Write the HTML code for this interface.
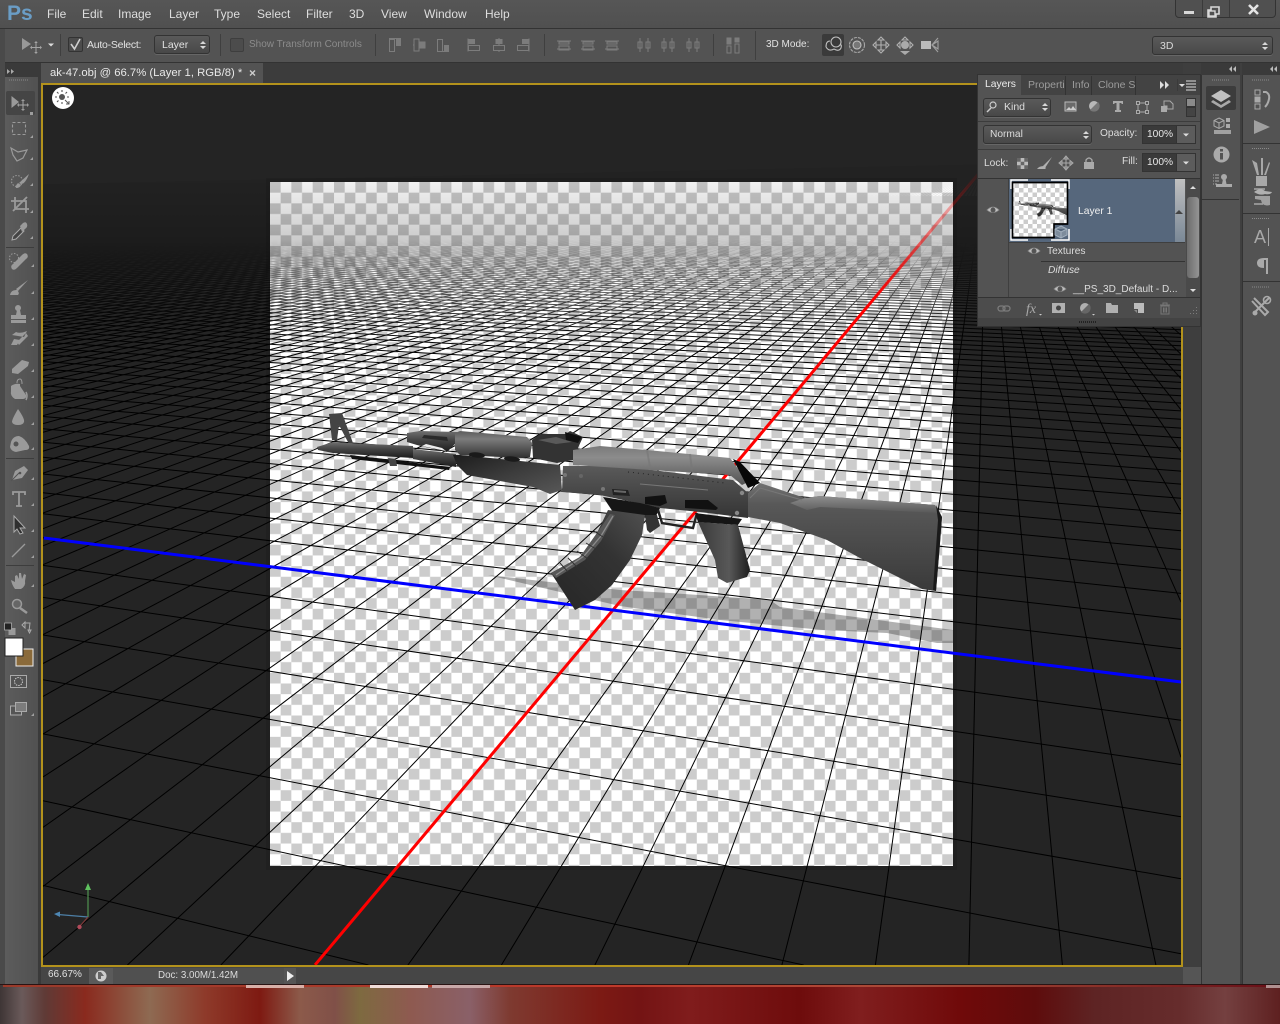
<!DOCTYPE html>
<html><head><meta charset="utf-8"><style>
html,body{margin:0;padding:0;background:#535353;width:1280px;height:1024px;overflow:hidden}
body{position:relative;font-family:"Liberation Sans",sans-serif}
.a{position:absolute}
.t{position:absolute;white-space:nowrap;font-size:11px;line-height:14px;color:#dcdcdc}
.m{font-size:12px;color:#dedede;top:7px}
.dd{position:absolute;box-sizing:border-box;background:linear-gradient(#5a5a5a,#484848);border:1px solid #333;border-radius:3px;box-shadow:0 1px 0 #666}
.fld{position:absolute;box-sizing:border-box;background:#3a3a3a;border:1px solid #333;width:35px;height:19px}
.arb{position:absolute;box-sizing:border-box;background:#5c5c5c;border:1px solid #333;border-left:0;width:19px;height:19px}
</style></head><body>
<div class="a" style="left:0;top:0;width:1280px;height:28px;background:linear-gradient(#565656,#505050)"></div>
<div class="a" style="left:0;top:28px;width:1280px;height:1px;background:#333"></div>
<div class="a" style="left:0;top:29px;width:1280px;height:33px;background:#535353"></div>
<div class="a" style="left:0;top:62px;width:1280px;height:1px;background:#333"></div>
<div class="a" style="left:0;top:63px;width:1201px;height:20px;background:#3c3c3c"></div>
<div class="a" style="left:0;top:29px;width:5px;height:955px;background:#4a4a4a"></div>
<div class="a" style="left:5px;top:63px;width:34px;height:14px;background:#3a3a3a"></div>
<div class="a" style="left:5px;top:77px;width:33px;height:907px;background:linear-gradient(90deg,#5c5c5c,#515151)"></div>
<div class="a" style="left:38px;top:63px;width:3px;height:921px;background:#3a3a3a"></div>
<div class="a" style="left:6px;top:91px;width:29px;height:24px;background:#454545;border-radius:2px"></div>
<div class="a" style="left:41px;top:63px;width:222px;height:20px;background:#535353"></div>

<!-- document view -->
<div class="a" style="left:41px;top:83px;width:1138px;height:880px;border:2px solid #b3921c;overflow:hidden;background:#242424">
<svg id="v" width="1138" height="880" viewBox="43 85 1138 880" style="display:block" xmlns="http://www.w3.org/2000/svg">
<defs>
<pattern id="chk" x="270" y="182" width="21.34" height="21.34" patternUnits="userSpaceOnUse"><rect width="21.34" height="21.34" fill="#fff"/><rect width="10.67" height="10.67" fill="#ccc"/><rect x="10.67" y="10.67" width="10.67" height="10.67" fill="#ccc"/></pattern>
<pattern id="chk2" width="9" height="9" patternUnits="userSpaceOnUse"><rect width="9" height="9" fill="#fff"/><rect width="4.5" height="4.5" fill="#ccc"/><rect x="4.5" y="4.5" width="4.5" height="4.5" fill="#ccc"/></pattern>
<linearGradient id="fade" gradientUnits="userSpaceOnUse" x1="0" y1="180" x2="0" y2="350"><stop offset="0" stop-color="#fff" stop-opacity=".05"/><stop offset=".35" stop-color="#fff" stop-opacity=".2"/><stop offset=".62" stop-color="#fff" stop-opacity=".55"/><stop offset=".85" stop-color="#fff" stop-opacity=".9"/><stop offset="1" stop-color="#fff" stop-opacity="1"/></linearGradient>
<mask id="gm" maskUnits="userSpaceOnUse" x="0" y="0" width="1280" height="1024"><rect width="1280" height="1024" fill="url(#fade)"/></mask>
<linearGradient id="rf" gradientUnits="userSpaceOnUse" x1="0" y1="170" x2="0" y2="300"><stop offset="0" stop-color="#f00" stop-opacity=".05"/><stop offset=".4" stop-color="#f00" stop-opacity=".4"/><stop offset="1" stop-color="#f00"/></linearGradient>
<linearGradient id="gV" x1="0" y1="0" x2="0" y2="1"><stop offset="0" stop-color="#707070"/><stop offset=".45" stop-color="#444"/><stop offset="1" stop-color="#1c1c1c"/></linearGradient>
<linearGradient id="gHg" x1="0" y1="0" x2="0" y2="1"><stop offset="0" stop-color="#5c5c5c"/><stop offset=".3" stop-color="#7c7c7c"/><stop offset=".7" stop-color="#505050"/><stop offset="1" stop-color="#303030"/></linearGradient>
<linearGradient id="gLo" x1="0" y1="0" x2="1" y2="1"><stop offset="0" stop-color="#1c1c1c"/><stop offset=".5" stop-color="#3c3c3c"/><stop offset="1" stop-color="#585858"/></linearGradient>
<linearGradient id="gDc" x1="0" y1="0" x2="0" y2="1"><stop offset="0" stop-color="#7a7a7a"/><stop offset=".3" stop-color="#8c8c8c"/><stop offset="1" stop-color="#525252"/></linearGradient>
<linearGradient id="gRc" x1="0" y1="0" x2="0" y2="1"><stop offset="0" stop-color="#5a5a5a"/><stop offset="1" stop-color="#343434"/></linearGradient>
<linearGradient id="gMg" x1="0" y1="1" x2="1" y2="0"><stop offset="0" stop-color="#262626"/><stop offset=".6" stop-color="#333"/><stop offset="1" stop-color="#505050"/></linearGradient>
<linearGradient id="gGr" x1="0" y1="0" x2="1" y2="0"><stop offset="0" stop-color="#3a3a3a"/><stop offset=".6" stop-color="#585858"/><stop offset="1" stop-color="#1e1e1e"/></linearGradient>
<linearGradient id="gSt" x1="0" y1="0" x2="0" y2="1"><stop offset="0" stop-color="#727272"/><stop offset=".2" stop-color="#585858"/><stop offset="1" stop-color="#3a3a3a"/></linearGradient>
<linearGradient id="gTop" x1="0" y1="0" x2="0" y2="1"><stop offset="0" stop-color="#8e8e8e"/><stop offset="1" stop-color="#585858"/></linearGradient>
<g id="gun">
<path d="M329 414L342 413L353 443L349 444L339 425L337 440L332 440Z" fill="#444"/>
<path d="M350 455L450 467L449 470L352 459Z" fill="#111"/>
<path d="M388 458L396 459L397 466L390 466Z" fill="#444"/>
<path d="M317 447L333 442L348 443L413 446L413 458L348 454L333 453L318 450Z" fill="url(#gV)"/>
<path d="M413 449L456 454L456 467L413 459Z" fill="url(#gV)"/>
<path d="M407 433L420 431L457 432L457 442L447 452L417 445L407 442Z" fill="url(#gV)"/>
<path d="M422 446L446 451L442 448L426 444Z" fill="#eee"/>
<path d="M422 438L448 441L447 437L424 435Z" fill="#2a2a2a"/>
<path d="M453 455L460 455L560 465L562 490L550 494L533 487L467 475L457 465Z" fill="url(#gLo)"/>
<path d="M455 433L460 431L527 437L532 443L530 457L523 458L460 455L455 450Z" fill="url(#gHg)"/>
<ellipse cx="477" cy="455" rx="8" ry="2.6" fill="#1a1a1a" transform="rotate(6 477 455)"/>
<ellipse cx="512" cy="459" rx="8" ry="2.6" fill="#1a1a1a" transform="rotate(6 512 459)"/>
<path d="M532 440L540 434L566 434L570 431L583 437L577 450L573 460L557 463L533 458Z" fill="#333"/>
<path d="M565 432L582 437L578 443L566 440Z" fill="#111"/>
<path d="M538 440L556 437L572 442L556 444Z" fill="#5a5a5a"/>
<path d="M563 466L620 466L733 480L748 493L748 518L700 512L660 508L600 495L562 492Z" fill="url(#gRc)"/>
<path d="M573 450L600 446L647 450L730 458L748 482L742 485L730 475L620 468L573 465Z" fill="url(#gDc)"/>
<path d="M647 450L650 467M690 454L692 471" stroke="#777" stroke-width="2" opacity=".6"/>
<path d="M628 472L725 483" stroke="#222" stroke-width="1" stroke-dasharray="1 4"/>
<path d="M640 484L708 490" stroke="#8a8a8a" stroke-width="1" opacity=".7"/>
<path d="M733 459L740 462L760 483L748 488Z" fill="#080808"/>
<path d="M603 497L640 503L660 508L655 518L613 512Z" fill="#161616"/>
<path d="M612 489L628 490L630 496L613 495Z" fill="#222"/><path d="M614 491L626 492" stroke="#666" stroke-width="2"/>
<circle cx="565" cy="475" r="2" fill="#777"/><circle cx="581" cy="476" r="2" fill="#666"/><circle cx="603" cy="489" r="2" fill="#777"/><circle cx="742" cy="493" r="2.2" fill="#888"/><circle cx="737" cy="513" r="2.2" fill="#888"/>
<path d="M645 497L665 495L667 503L660 506L645 504Z" fill="#111"/>
<path d="M685 500L708 500L718 508L716 510L685 508Z" fill="#111"/>
<path d="M608 510L645 515L642 535L630 560L612 585L595 600L575 610L551 573L580 557L597 533Z" fill="url(#gMg)"/>
<path d="M610 514L615 515L601 541L585 560L556 578L551 573L580 557L597 533Z" fill="#585858"/>
<path d="M613 516L601 536L584 556L556 575" stroke="#8c8c8c" stroke-width="1.3" fill="none"/>
<path d="M594 531L603 537M586 543L596 549M577 551L588 559M568 558L577 567M560 563L568 572" stroke="#333" stroke-width="1"/>
<path d="M645 515L657 515L660 526L650 533L647 530Z" fill="#333"/>
<path d="M658 510L662 523L693 528L697 513" stroke="#222" stroke-width="2.4" fill="none"/>
<path d="M695 513L742 519L738 525L698 522Z" fill="#151515"/>
<path d="M698 522L738 525L750 570L747 577L727 583L718 578L715 560Z" fill="url(#gGr)"/>
<path d="M748 493L760 483L805 498L820 496L935 505L942 517L940 543L936 591L922 589L860 558L827 540L780 523L748 517Z" fill="url(#gSt)"/>
<path d="M805 498L820 496L935 505L939 513L820 507L807 510L790 503Z" fill="url(#gTop)"/>
<path d="M936 505L942 517L940 543L936 591L933 590L938 520Z" fill="#1a1a1a"/>
<path d="M750 498L760 488L802 500" stroke="#777" stroke-width="1" fill="none"/>
</g>
</defs>
<rect x="266" y="178" width="691" height="692" fill="#1c1c1c" opacity=".5"/>
<rect x="270" y="182" width="683" height="684" fill="url(#chk)"/>
<path d="M488 575L620 590L670 593L770 600L780 607L953 630L953 643L937 643L887 633L823 630L720 620L620 606L560 592Z" fill="#444" opacity=".42"/>
<g id="grid" mask="url(#gm)" stroke="#000" stroke-width="1" fill="none"></g>
<line x1="315" y1="965" x2="780" y2="411" stroke="#f00" stroke-width="3"/>
<line x1="780" y1="411" x2="985" y2="166" stroke="url(#rf)" stroke-width="3"/>
<line x1="44" y1="538" x2="1181" y2="682" stroke="#00f" stroke-width="3"/>
<use href="#gun"/>
<path d="M88 917V888" stroke="#4d8a4d" stroke-width="1.3"/><path d="M88 883L91 890H85Z" fill="#5fc25f"/>
<path d="M88 917L58 914.5" stroke="#4d7fa6" stroke-width="1.3"/><path d="M54 914L60 911.5V917Z" fill="#4d86b3"/>
<path d="M88 917L80 926" stroke="#7a3a3a" stroke-width="1.3"/><circle cx="79.5" cy="927" r="2.2" fill="#b04a5a"/>
</svg>
</div>

<!-- status -->
<div class="a" style="left:41px;top:967px;width:1142px;height:17px;background:#464646"></div>
<div class="a" style="left:89px;top:968px;width:24px;height:16px;background:#5a5a5a"></div>
<div class="a" style="left:113px;top:968px;width:171px;height:16px;background:#505050"></div>
<div class="a" style="left:284px;top:968px;width:12px;height:16px;background:#555"></div>
<div class="a" style="left:1183px;top:63px;width:18px;height:904px;background:#3e3e3e"></div>
<div class="a" style="left:1183px;top:967px;width:18px;height:17px;background:#555"></div>

<!-- right docks -->
<div class="a" style="left:1201px;top:63px;width:79px;height:12px;background:#3a3a3a"></div>
<div class="a" style="left:1201px;top:75px;width:38px;height:909px;background:#535353;border-right:1px solid #333;border-left:1px solid #333"></div>
<div class="a" style="left:1242px;top:75px;width:38px;height:909px;background:#535353;border-left:1px solid #333"></div>
<div class="a" style="left:1240px;top:63px;width:2px;height:921px;background:#3f3f3f"></div>
<div class="a" style="left:1202px;top:199px;width:37px;height:1px;background:#333"></div>
<div class="a" style="left:1243px;top:143px;width:37px;height:1px;background:#333"></div>
<div class="a" style="left:1243px;top:213px;width:37px;height:1px;background:#333"></div>
<div class="a" style="left:1243px;top:281px;width:37px;height:1px;background:#333"></div>
<div class="a" style="left:1206px;top:86px;width:30px;height:24px;background:#3c3c3c;border-radius:2px"></div>

<!-- layers panel -->
<div class="a" style="left:978px;top:75px;width:222px;height:251px;background:#535353;box-shadow:0 0 0 1px #333"></div>
<div class="a" style="left:978px;top:75px;width:222px;height:20px;background:#434343"></div>
<div class="a" style="left:978px;top:75px;width:43px;height:21px;background:#535353"></div>
<div class="a" style="left:1065px;top:76px;width:1px;height:19px;background:#333"></div>
<div class="a" style="left:1091px;top:76px;width:1px;height:19px;background:#333"></div>
<div class="a" style="left:1135px;top:76px;width:1px;height:19px;background:#333"></div>
<div class="dd" style="left:983px;top:98px;width:68px;height:19px"></div>
<div class="a" style="left:1186px;top:98px;width:10px;height:9px;background:#8a8a8a;border:1px solid #333;box-sizing:border-box"></div>
<div class="a" style="left:1186px;top:107px;width:10px;height:10px;background:#444;border:1px solid #333;box-sizing:border-box"></div>
<div class="a" style="left:978px;top:121px;width:222px;height:1px;background:#3c3c3c"></div>
<div class="dd" style="left:983px;top:125px;width:109px;height:19px"></div>
<div class="fld" style="left:1142px;top:125px"></div><div class="arb" style="left:1177px;top:125px"></div>
<div class="a" style="left:978px;top:149px;width:222px;height:1px;background:#3c3c3c"></div>
<div class="fld" style="left:1142px;top:153px"></div><div class="arb" style="left:1177px;top:153px"></div>
<div class="a" style="left:978px;top:178px;width:222px;height:1px;background:#333"></div>
<div class="a" style="left:1009px;top:179px;width:176px;height:63px;background:#56677c"></div>
<div class="a" style="left:1175px;top:179px;width:10px;height:63px;background:linear-gradient(#c0c0c0,#7a8896)"></div>
<div class="a" style="left:1009px;top:242px;width:176px;height:1px;background:#3f3f3f"></div>
<div class="a" style="left:1008px;top:179px;width:1px;height:118px;background:#3f3f3f"></div>
<div class="a" style="left:1041px;top:261px;width:144px;height:1px;background:#333"></div>
<div class="a" style="left:1186px;top:179px;width:14px;height:118px;background:#4a4a4a"></div>
<div class="a" style="left:1187px;top:197px;width:12px;height:81px;background:linear-gradient(90deg,#6c6c6c,#949494);border-radius:3px"></div>
<div class="a" style="left:978px;top:297px;width:222px;height:1px;background:#333"></div>
<div class="a" style="left:978px;top:298px;width:222px;height:20px;background:#4c4c4c"></div>
<div class="a" style="left:978px;top:318px;width:222px;height:8px;background:#434343"></div>
<svg class="a" style="left:1010px;top:179px" width="60" height="62" xmlns="http://www.w3.org/2000/svg">
<path d="M1 10V1H18M41 1H59V10M1 50V61H18M41 61H59V50" fill="none" stroke="#fff" stroke-width="1.5"/>
<path d="M2.500 3.500H57.500V45H44V58.500H2.500Z" fill="url(#chk2)" stroke="#000" stroke-width="1.400"/>
<g transform="translate(-17.400 -11) scale(.08)"><use href="#gun"/></g>
<path d="M2.500 3.500H57.500V45H44V58.500H2.500Z" fill="none" stroke="#000" stroke-width="1.400"/>
<path d="M51 47L57 50V56L51 59L45 56V50ZM45 50L51 53L57 50M51 53V59" fill="#7d8c9c" stroke="#a3b1bf" stroke-width="1"/>
</svg>

<!-- menu text -->
<div class="t" style="left:7px;top:3px;font-size:21px;line-height:22px;font-weight:bold;color:#6a9dc6">Ps</div>
<div class="t m" style="left:47px">File</div>
<div class="t m" style="left:82px">Edit</div>
<div class="t m" style="left:118px">Image</div>
<div class="t m" style="left:169px">Layer</div>
<div class="t m" style="left:214px">Type</div>
<div class="t m" style="left:257px">Select</div>
<div class="t m" style="left:306px">Filter</div>
<div class="t m" style="left:349px">3D</div>
<div class="t m" style="left:381px">View</div>
<div class="t m" style="left:424px">Window</div>
<div class="t m" style="left:485px">Help</div>

<!-- window controls -->
<div class="a" style="left:1175px;top:-1px;width:101px;height:19px;box-sizing:border-box;background:#505050;border:1px solid #333;border-radius:0 0 4px 4px"></div>
<div class="a" style="left:1202px;top:0;width:1px;height:17px;background:#3a3a3a"></div>
<div class="a" style="left:1229px;top:0;width:1px;height:17px;background:#3a3a3a"></div>

<!-- options -->
<div class="a" style="left:68px;top:37px;width:15px;height:15px;box-sizing:border-box;background:#4c4c4c;border:1px solid #333;border-radius:2px"></div>
<div class="t" style="left:87px;top:38px;font-size:10.5px;letter-spacing:-.25px;color:#e2e2e2">Auto-Select:</div>
<div class="dd" style="left:154px;top:35px;width:56px;height:19px"></div>
<div class="t" style="left:162px;top:38px;font-size:10.5px;color:#e2e2e2">Layer</div>
<div class="a" style="left:230px;top:38px;width:14px;height:14px;box-sizing:border-box;background:#4c4c4c;border:1px solid #3e3e3e;border-radius:2px"></div>
<div class="t" style="left:249px;top:38px;font-size:10px;color:#8c8c8c">Show Transform Controls</div>
<div class="t" style="left:766px;top:38px;font-size:10px;color:#e2e2e2">3D Mode:</div>
<div class="a" style="left:822px;top:34px;width:22px;height:22px;background:#3a3a3a;border-radius:2px"></div>
<div class="dd" style="left:1152px;top:36px;width:121px;height:19px"></div>
<div class="t" style="left:1160px;top:39px;font-size:10.5px;color:#d8d8d8">3D</div>
<div class="t" style="left:50px;top:66px;font-size:11.3px;color:#e8e8e8">ak-47.obj @ 66.7% (Layer 1, RGB/8) *</div>

<!-- layer text -->
<div class="t" style="left:985px;top:78px;font-size:10.3px;color:#ececec">Layers</div>
<div class="t" style="left:1028px;top:78px;font-size:10.5px;color:#9c9c9c;width:37px;overflow:hidden">Properties</div>
<div class="t" style="left:1072px;top:78px;font-size:10.5px;color:#9c9c9c">Info</div>
<div class="t" style="left:1098px;top:78px;font-size:10.5px;color:#9c9c9c;width:37px;overflow:hidden">Clone Source</div>
<div class="t" style="left:1004px;top:100px;font-size:10.5px;color:#dcdcdc">Kind</div>
<div class="t" style="left:990px;top:128px;font-size:10.2px;color:#dcdcdc">Normal</div>
<div class="t" style="left:1100px;top:127px;font-size:10.2px;color:#dcdcdc">Opacity:</div>
<div class="t" style="left:1147px;top:128px;font-size:10.2px;color:#e8e8e8">100%</div>
<div class="t" style="left:984px;top:157px;font-size:10.2px;color:#dcdcdc">Lock:</div>
<div class="t" style="left:1122px;top:155px;font-size:10.2px;color:#dcdcdc">Fill:</div>
<div class="t" style="left:1147px;top:156px;font-size:10.2px;color:#e8e8e8">100%</div>
<div class="t" style="left:1078px;top:205px;font-size:10.3px;color:#f0f0f0">Layer 1</div>
<div class="t" style="left:1047px;top:245px;font-size:10.2px;color:#dcdcdc">Textures</div>
<div class="t" style="left:1048px;top:264px;font-size:10.2px;font-style:italic;color:#dcdcdc">Diffuse</div>
<div class="t" style="left:1073px;top:283px;font-size:10px;color:#dcdcdc">__PS_3D_Default - D...</div>

<!-- status text -->
<div class="t" style="left:48px;top:968px;font-size:10px;color:#e2e2e2">66.67%</div>
<div class="t" style="left:158px;top:969px;font-size:9.8px;color:#dcdcdc">Doc: 3.00M/1.42M</div>

<!-- icons overlay -->
<svg class="a" style="left:0;top:0;pointer-events:none" width="1280" height="1024" viewBox="0 0 1280 1024" xmlns="http://www.w3.org/2000/svg">
<defs>
<g id="eye"><path d="M-6 0Q0 -6 6 0Q0 5 -6 0Z" fill="#c0c0c0" stroke="#888" stroke-width=".8"/><circle r="2.5" fill="#555"/></g>
<g id="ud"><path d="M-3 -1L0 -4L3 -1ZM-3 1L0 4L3 1Z" fill="#d8d8d8"/></g>
<path id="ar" d="M-3 -1.5H3L0 1.5Z" fill="#ddd"/>
<g id="al1" fill="none" stroke="#7c7c7c"><path d="M-6 -6.5H6"/><rect x="-5.5" y="-5.5" width="5" height="12"/><rect x="1.5" y="-5.5" width="4" height="6" fill="#7c7c7c"/></g>
<g id="al2" fill="none" stroke="#7c7c7c"><path d="M-6 0H6"/><rect x="-5" y="-6" width="5" height="12" fill="#535353"/><rect x="1" y="-3" width="5" height="6" fill="#7c7c7c"/></g>
<g id="al3" fill="none" stroke="#7c7c7c"><path d="M-6 6.5H6"/><rect x="-5.5" y="-5.5" width="5" height="12"/><rect x="1.5" y="0.5" width="4" height="6" fill="#7c7c7c"/></g>
<g id="al4" fill="none" stroke="#7c7c7c"><path d="M-6 -6.5V6.5"/><rect x="-5.5" y="-5.5" width="6" height="4" fill="#7c7c7c"/><rect x="-5.5" y="0.5" width="11" height="5"/></g>
<g id="al5" fill="none" stroke="#7c7c7c"><path d="M0 -7V7"/><rect x="-3" y="-5.5" width="6" height="4" fill="#7c7c7c"/><rect x="-5.5" y="0.5" width="11" height="5" fill="#535353"/></g>
<g id="al6" fill="none" stroke="#7c7c7c"><path d="M6 -6.5V6.5"/><rect x="-0.5" y="-5.5" width="6" height="4" fill="#7c7c7c"/><rect x="-5.5" y="0.5" width="11" height="5"/></g>
<g id="dis" fill="none" stroke="#7c7c7c"><path d="M-7 -4H7M-7 4H7"/><rect x="-5" y="-3" width="10" height="2"/><rect x="-5" y="1" width="10" height="4"/></g>
<g id="dih" fill="none" stroke="#7c7c7c"><path d="M-4 -7V7M4 -7V7"/><rect x="-6" y="-3" width="4" height="6"/><rect x="2" y="-3" width="4" height="6"/></g>
</defs>
<!-- window btns -->
<rect x="1184" y="11" width="10" height="3" fill="#d8d8d8"/>
<path d="M1211 7h8v7h-3v3h-8v-7h3z" fill="none" stroke="#d8d8d8" stroke-width="1.6"/><rect x="1209" y="11" width="6" height="5" fill="none" stroke="#d8d8d8" stroke-width="1.4"/>
<path d="M1249 5L1258 14M1258 5L1249 14" stroke="#e4e4e4" stroke-width="2.6"/>
<!-- options icons -->
<path d="M22 38L31 44L22 50Z" fill="#989898"/>
<path d="M36 42V53M31 47.5H41" stroke="#a4a4a4" stroke-width="1"/><path d="M36 41l-1.8 2h3.6zM36 54l-1.8-2h3.6zM30 47.500l2 -1.800v3.600zM42 47.500l-2 -1.800v3.600z" fill="#a4a4a4"/>
<use href="#ar" x="51" y="45"/>
<path d="M71 44L74.5 49L80 39" fill="none" stroke="#cfcfcf" stroke-width="1.6"/>
<use href="#ud" x="203" y="45"/><use href="#ud" x="1265" y="46"/>
<path d="M60.500 34V56M220.500 34V56M375.500 34V56M544.500 34V56M713.500 34V56M755.500 31V60" stroke="#3f3f3f"/>
<use href="#al1" x="395" y="45"/><use href="#al2" x="419" y="45"/><use href="#al3" x="443" y="45"/>
<use href="#al4" x="474" y="45"/><use href="#al5" x="499" y="45"/><use href="#al6" x="523" y="45"/>
<use href="#dis" x="564" y="45"/><use href="#dis" x="588" y="45"/><use href="#dis" x="612" y="45"/>
<use href="#dih" x="644" y="45"/><use href="#dih" x="668" y="45"/><use href="#dih" x="693" y="45"/>
<g fill="none" stroke="#7c7c7c"><rect x="727" y="38" width="4" height="6" fill="#7c7c7c"/><rect x="727" y="46" width="4" height="7"/><rect x="735" y="38" width="4" height="4" fill="#7c7c7c"/><rect x="735" y="44" width="4" height="9"/></g>
<!-- 3d modes -->
<g fill="none" stroke="#c0c0c0" stroke-width="1.100"><circle cx="836" cy="42" r="5"/><path d="M826 47Q826 41 830 41M826 47Q829 52 834 49M834 49Q839 52 841 48Q842 45 840 44"/>
<circle cx="857" cy="45" r="7.500" stroke="#a8a8a8" stroke-dasharray="3 1"/><circle cx="857" cy="45" r="4" fill="#777"/>
<path d="M881 39V51M875 45H887" stroke="#b0b0b0"/><path d="M881 37l-3 3h6zM881 53l-3 -3h6zM873 45l3 -3v6zM889 45l-3 -3v6z" stroke="#b0b0b0" fill="#535353"/>
<path d="M905 37l-3 3h6zM897 45l3 -3v6zM913 45l-3 -3v6z" stroke="#b0b0b0" fill="#535353"/><circle cx="905" cy="45" r="4" fill="#aaa" stroke="none"/><path d="M900 51H910L905 55Z" fill="#aaa" stroke="none"/>
<rect x="921" y="41" width="10" height="8" fill="#bbb" stroke="none"/><path d="M932 45L938 41V49Z M932 45L938 38M932 45L938 52" stroke="#a0a0a0"/></g>
<!-- collapse arrows -->
<path d="M7 69l3 2.500-3 2.500zM11 69l3 2.500-3 2.500z" fill="#aaa"/>
<path d="M1233 65l-3 3 3 3zM1237 65l-3 3 3 3zM1274 65l-3 3 3 3zM1278 65l-3 3 3 3z" fill="#bbb" transform="translate(-1 1)"/>
<path d="M1160 81l4 4-4 4zM1165 81l4 4-4 4z" fill="#ddd"/>
<path d="M1177.500 79V91" stroke="#3a3a3a"/><path d="M1179 84h6l-3 3z" fill="#ddd"/><path d="M1186 81h10M1186 84h10M1186 87h10M1186 90h10" stroke="#ddd"/>
<path d="M250 70.500l5 5M255 70.500l-5 5" stroke="#ccc" stroke-width="1.400"/>
<!-- doc sun icon -->
<circle cx="63" cy="98" r="11" fill="#fff"/><circle cx="62" cy="97" r="3" fill="#555"/><path d="M62 90v2M62 102v2M55 97h2M67 97h2M57 92l1.500 1.500M67 92l-1.500 1.500M57 102l1.500-1.500" stroke="#555" stroke-width="1.100"/><path d="M65 100l4 4m0-3v3h-3" stroke="#555" fill="none"/>
<!-- grips -->
<g stroke="#8a8a8a" stroke-dasharray="1 1"><path d="M9 80h19M1212 80h18M1252 80h18M1252 148.500h18M1252 218.500h18M1252 287h18"/><path d="M1079 322h18" stroke="#222" stroke-width="2"/></g>
<!-- tools -->
<g fill="#9a9a9a">
<path d="M11.500 96L19 102L11.500 108Z"/>
<path d="M23 100V110M18 105H28" stroke="#a8a8a8"/><path d="M23 99l-2 2h4zM23 111l-2-2h4zM17 105l2-2v4zM29 105l-2-2v4z"/>
<rect x="12.500" y="122.500" width="13" height="12" fill="none" stroke="#9a9a9a" stroke-width="1.100" stroke-dasharray="3 2"/>
<path d="M11 148L18 152L27 150L23 158L17 161L13 155Z" fill="none" stroke="#9a9a9a" stroke-width="1.200"/>
<circle cx="17" cy="181" r="5.500" fill="none" stroke="#9a9a9a" stroke-dasharray="1.500 1.500" stroke-width="1.100"/><path d="M29 174L19 183Q24 187 29 174ZM18 183Q15 186 16 188Q20 188 21 185Z"/>
<path d="M11 201H26V213M15 197V209H29M27 197L13 211" fill="none" stroke="#9a9a9a" stroke-width="1.800"/>
<path d="M12 240L13 236L21 228L24 231L16 239Z" fill="#444" stroke="#aaa"/><path d="M20 226L23 223Q26 221 27 224Q28 227 25 229L22 232Z"/>
<path d="M13 264L22 255Q25 252 27 254Q29 257 26 259L17 268Q14 271 12 269Q10 266 13 264Z"/><circle cx="14" cy="258" r="4.500" fill="none" stroke="#9a9a9a" stroke-dasharray="1.500 1.500"/>
<path d="M28 280L18 291L16 289ZM16 290Q11 290 10 295L18 295Q20 293 17 290Z"/>
<circle cx="18" cy="308" r="3"/><path d="M17 310H20L21 315H26V319H11V315H16ZM11 320H26V323H11Z"/>
<path d="M16 332Q20 334 27 331L24 337L12 335Z M26 333L17 342L19 345L28 336Z M11 345H17L20 340L14 339Z" />
<path d="M12 369L22 360L29 362L28 366L18 374L12 373Z" />
<path d="M11 386Q15 383 20 384V386L26 395Q27 399 22 399H15Q10 396 11 391Z"/><path d="M17 383Q17 379 20 379Q22 379 22 384" fill="none" stroke="#9a9a9a"/><path d="M26 392Q28 396 26 400" fill="none" stroke="#9a9a9a" stroke-width="1.500"/>
<path d="M18 409Q25 419 24 422Q23 425 18 425Q13 425 12 422Q12 419 18 409Z"/>
<path d="M11 442Q13 436 19 436Q25 438 29 446Q30 450 25 450L16 452Q11 451 10 447Z"/><circle cx="16" cy="444" r="2.500" fill="#555"/>
<path d="M12 480L15 471L24 466L28 470L22 478Z" fill="#9a9a9a"/><path d="M11 481L19 473" stroke="#535353"/><circle cx="20" cy="473" r="1.300" fill="#535353"/>
<path d="M13 495V492H25V495M19 492V506M16 506H22" fill="none" stroke="#9a9a9a" stroke-width="1.800"/>
<path d="M14 516L25 528L20 528L23 533L20 534L17 529L14 532Z" fill="#2f2f2f" stroke="#aaa" stroke-width="1"/>
<path d="M12 557L25 544" stroke="#9a9a9a" stroke-width="1.300"/>
<path d="M11 580L15 582V576L17 575L19 579V573H21L22 579L24 574L26 575L25 581Q26 586 21 589H15Q12 585 11 580Z"/>
<circle cx="17" cy="604" r="4.500" fill="#666" stroke="#9a9a9a" stroke-width="1.500"/><path d="M20 608L27 613" stroke="#9a9a9a" stroke-width="2.500"/>
<rect x="8.500" y="628" width="7" height="7" fill="#9a9a9a"/><rect x="4.500" y="623" width="7" height="7" fill="#222" stroke="#aaa" stroke-width=".8"/>
<path d="M24 623L30 623L29 631M22 625l3-3v6zM28 630l3-0l-1.500 3z" fill="none" stroke="#aaa"/>
</g>
<rect x="16" y="649" width="17" height="17" fill="#8a6a3a" stroke="#eee" stroke-width="1"/>
<rect x="5" y="638" width="18" height="18" fill="#fff" stroke="#222" stroke-width="1"/>
<rect x="10.500" y="675.500" width="16" height="12" fill="#535353" stroke="#aaa"/><circle cx="18.500" cy="681.500" r="4" fill="none" stroke="#ccc" stroke-dasharray="1.500 1"/>
<rect x="10.500" y="706" width="11" height="9" fill="#555" stroke="#aaa"/><rect x="15.500" y="702.500" width="11" height="9" fill="#7c7c7c" stroke="#aaa"/>
<g fill="#bbb" opacity=".75"><path d="M30 112h3v3h-3zM30 138h3v-3zM33 160v-3l-3 3zM30 186h3v-3h-0zM30 213h3v-3zM30 239h3v-3zM31 267h3v-3zM31 294h3v-3zM31 320h3v-3zM31 346h3v-3zM31 372h3v-3zM31 398h3v-3zM31 425h3v-3zM31 450h3v-3zM31 480h3v-3zM31 506h3v-3zM31 532h3v-3zM31 558h3v-3zM31 587h3v-3zM31 716h3v-3z"/></g>
<path d="M6 247.500H34M6 458.500H34M6 565.500H34" stroke="#3d3d3d"/>
<!-- status icons -->
<circle cx="101" cy="976" r="5.500" fill="#ccc"/><path d="M98 972h3l3 4h-3v3h-3z" fill="#666"/>
<path d="M287 971L294 976L287 981Z" fill="#eee"/>
<!-- layers panel icons -->
<circle cx="993" cy="105" r="3" fill="none" stroke="#ccc" stroke-width="1.200"/><path d="M991 108L987 112" stroke="#ccc" stroke-width="1.500"/>
<use href="#ud" x="1045" y="107"/><use href="#ud" x="1086" y="135"/>
<path d="M1065 102h11v9h-11z" fill="#6a6a6a" stroke="#b8b8b8"/><path d="M1066 110l3-3 2 2 2-3 3 4z" fill="#ccc"/>
<circle cx="1094" cy="106" r="5" fill="#b8b8b8"/><path d="M1090 110A5 5 0 0 0 1098 102Z" fill="#777"/>
<path d="M1113 101H1123V104H1122L1121 103H1119.500V110H1121V112H1115V110H1116.500V103H1115L1114 104H1113Z" fill="#aaa"/>
<path d="M1138 103h9v9h-9z" fill="none" stroke="#aaa"/><path d="M1136.500 101.500h3v3h-3zM1145.500 101.500h3v3h-3zM1136.500 110.500h3v3h-3zM1145.500 110.500h3v3h-3z" fill="#535353" stroke="#aaa"/>
<path d="M1164 101h6l3 3v5h-6v-3h-3z" fill="none" stroke="#aaa"/><rect x="1161" y="106" width="6" height="6" fill="#aaa"/>
<use href="#ar" x="1186" y="135"/><use href="#ar" x="1186" y="163"/>
<g><rect x="1017" y="158" width="11" height="11" fill="#bbb"/><path d="M1017 158h3.700v3.700h-3.700zM1024.300 158h3.700v3.700h-3.700zM1020.700 161.700h3.600v3.600h-3.600zM1017 165.300h3.700v3.700h-3.700zM1024.300 165.300h3.700v3.700h-3.700z" fill="#666"/></g>
<path d="M1052 157L1043 166L1045 168ZM1044 166Q1039 166 1037 169L1045 169Q1047 168 1044 166Z" fill="#b0b0b0"/>
<path d="M1066 157V169M1060 163H1072" stroke="#aaa"/><path d="M1066 156l-2.500 3h5zM1066 170l-2.500-3h5zM1059 163l3-2.500v5zM1073 163l-3-2.500v5z" fill="none" stroke="#aaa"/>
<rect x="1084" y="162" width="10" height="7" fill="#aaa"/><path d="M1086 162v-2q3-4 6 0v2" fill="none" stroke="#aaa" stroke-width="1.300"/>
<use href="#eye" x="993" y="210"/><use href="#eye" x="1034" y="251"/><use href="#eye" x="1060" y="289"/>
<path d="M1179 210L1183 214H1175Z" fill="#444"/>
<path d="M1193 186l3 3h-6zM1193 292l3-3h-6z" fill="#ddd"/>
<!-- footer -->
<rect x="998" y="306" width="7" height="5" rx="2.500" fill="none" stroke="#7c7c7c" stroke-width="1.300"/><rect x="1003" y="306" width="7" height="5" rx="2.500" fill="none" stroke="#7c7c7c" stroke-width="1.300"/>
<text x="1026" y="313" font-family="Liberation Serif,serif" font-style="italic" font-size="14" fill="#a8a8a8">fx</text><path d="M1039 314h3l-1.500 1.500z" fill="#ccc"/>
<rect x="1052" y="303" width="13" height="10" fill="#b0b0b0"/><circle cx="1058.500" cy="308" r="2.500" fill="#444"/>
<circle cx="1085" cy="308" r="5" fill="#b0b0b0"/><path d="M1081 312A5 5 0 0 0 1089 304Z" fill="#666"/><path d="M1092 314h3l-1.500 1.500z" fill="#ccc"/>
<path d="M1106 303h5l1 2h6v8h-12z" fill="#b0b0b0"/>
<path d="M1134 303h10v10h-6v-4h-4z" fill="#bbb"/><path d="M1134 310h3v3z" fill="#888"/>
<path d="M1160 305h10M1163 305v-2h4v2M1161 306h8v8h-8zM1163.500 307.500v5M1165 307.500v5M1166.500 307.500v5" fill="none" stroke="#777"/>
<g fill="#7c7c7c"><rect x="1196" y="313" width="1" height="1"/><rect x="1193" y="313" width="1" height="1"/><rect x="1190" y="313" width="1" height="1"/><rect x="1196" y="310" width="1" height="1"/><rect x="1193" y="310" width="1" height="1"/><rect x="1196" y="307" width="1" height="1"/></g>
<!-- dock col 1 -->
<path d="M1221 90L1231 96L1221 102L1211 96Z" fill="#c0c0c0"/><path d="M1213 100L1221 105L1229 100L1231 102L1221 108L1211 102Z" fill="#a8a8a8"/>
<path d="M1219 118l5 2.500v5.500l-5 2.500-5-2.500v-5.500z" fill="none" stroke="#aaa"/><path d="M1214 120.500l5 2.500 5-2.500M1219 123v5.500" stroke="#aaa" fill="none"/><rect x="1226" y="118" width="4" height="4" fill="#aaa"/><rect x="1226" y="124" width="4" height="4" fill="#aaa"/><rect x="1214" y="130" width="17" height="4" fill="#a0a0a0"/>
<circle cx="1221.500" cy="154.500" r="8" fill="#aaa"/><rect x="1220" y="153" width="3" height="6.500" fill="#535353"/><rect x="1220" y="149" width="3" height="2.500" fill="#535353"/>
<path d="M1213 175h6M1213 178h6M1213 181h6M1213 184h4" stroke="#a8a8a8" stroke-dasharray="1 1 4 0"/><circle cx="1224" cy="177" r="3" fill="#aaa"/><path d="M1223 179h2.500l1 5H1232v3h-16v-3h6z" fill="#aaa"/>
<!-- dock col 2 -->
<g fill="none" stroke="#aaa"><rect x="1255" y="90" width="5" height="5"/><rect x="1255" y="97" width="5" height="5" fill="#aaa"/><rect x="1255" y="104" width="5" height="5"/><path d="M1263 92h3q4 2 3 7t-4 8" stroke-width="2"/></g>
<path d="M1254 120L1270 127L1254 134Z" fill="#a0a0a0"/>
<path d="M1256 176h11v10h-11z M1252 160l5 3 2 12h-2z M1261 158l2 0v17h-2z M1269 162l1 1-4 12h-2z" fill="#a8a8a8"/>
<path d="M1254 189h11M1254 204h9" stroke="#a8a8a8" stroke-width="1.500"/><path d="M1254 192q6-5 11-1l7 1q-1 3-7 2q-5 2-11 -2z" fill="#b0b0b0"/><path d="M1255 196h12l3 -0v9q-8 2-9-5l-6-1z" fill="#a0a0a0"/>
<text x="1254" y="243" font-family="Liberation Sans,sans-serif" font-size="18" fill="#a8a8a8">A</text><path d="M1268.500 228V246" stroke="#a8a8a8"/>
<path d="M1268 258v16h-2v-14h-2v8q-7 0-7-5t7-5z" fill="#aaa"/>
<path d="M1254 298L1268 312L1265 315L1252 301M1269 298L1255 312" fill="none" stroke="#aaa" stroke-width="2"/><circle cx="1267" cy="300" r="3.500" fill="none" stroke="#aaa" stroke-width="1.600"/><circle cx="1255" cy="313" r="2.500" fill="#aaa"/>
</svg>

<!-- taskbar -->
<div class="a" style="left:0;top:984px;width:1280px;height:40px;background:linear-gradient(90deg,#3e3535 0,#6a5a5a 22px,#5f3a36 45px,#8a2a1e 85px,#8e6a52 150px,#8e3a2a 205px,#7e1a12 260px,#8c5a4a 300px,#805048 335px,#7e6a40 360px,#8e5a50 410px,#8a6068 470px,#7e3a30 510px,#7c1a14 600px,#741414 640px,#801c1c 690px,#6e0c0c 800px,#801e1e 860px,#700a0a 960px,#5e0c0c 1035px,#5e2424 1095px,#662c2c 1180px,#744040 1225px,#5e2020 1280px)"></div>
<div class="a" style="left:0;top:984px;width:1280px;height:1px;background:#2a1414"></div>
<div class="a" style="left:3px;top:985px;width:1263px;height:2px;background:linear-gradient(90deg,#9a3a2a,#a83a2a 300px,#c0392a 600px,#a84a38 900px,#8a3028 1100px,#6a1018 1266px)"></div>
<div class="a" style="left:246px;top:985px;width:58px;height:3px;background:#d8b0a8"></div>
<div class="a" style="left:370px;top:985px;width:58px;height:3px;background:#f0dcd8"></div>
<div class="a" style="left:432px;top:985px;width:58px;height:3px;background:#c8a8a8"></div>
<div class="a" style="left:1266px;top:985px;width:14px;height:3px;background:#b09090"></div>

<script>
(function(){
var g=document.getElementById('grid'),h=165,xv=-2900,vx=986,b=1.4e-4,c=3.81e-6,s='',B=965,Lx=43,Rx=1181;
function L(a,bb,e,f){s+='<line x1="'+a.toFixed(1)+'" y1="'+bb.toFixed(1)+'" x2="'+e.toFixed(1)+'" y2="'+f.toFixed(1)+'"/>';}
for(var n=-15;n<=210;n++){
  var d=1/445+b*n; if(d<=0)continue;
  var y=h+1/d,x=612.7+.8386*(610-y),k=(y-h)/(x-xv);
  var y1=h+k*(Lx-xv),x2=Rx,y2=h+k*(Rx-xv);
  if(y1>B)continue;
  if(y2>B){x2=xv+(B-h)/k;y2=B;}
  L(Lx,y1,x2,y2);
}
for(var m=-400;m<=74;m++){
  var X=xv+1/(2.847e-4-c*m),Y=610+.1268*(X-612.7);
  var sl=(X-vx)/(Y-h);
  var ye=B,xe=vx+sl*(B-h);
  if(xe<Lx){xe=Lx;ye=h+(Lx-vx)/sl;}
  if(xe>Rx){xe=Rx;ye=h+(Rx-vx)/sl;}
  L(vx,h,xe,ye);
}
g.innerHTML=s;
})();
</script>
</body></html>
